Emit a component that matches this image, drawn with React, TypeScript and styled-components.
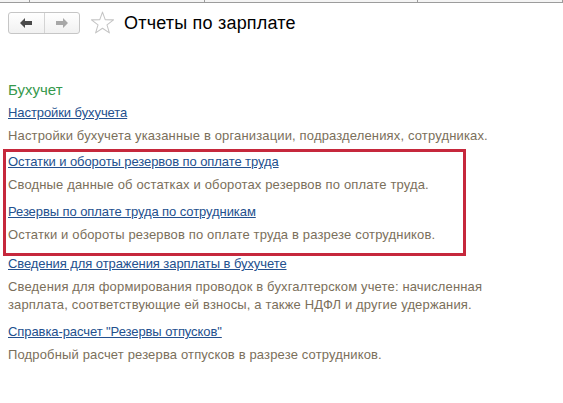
import React from 'react';
import styled, { createGlobalStyle } from 'styled-components';

const GlobalStyle = createGlobalStyle`
    body {
        margin: 0;
        background: #ffffff;
        font-family: "Liberation Sans", Arial, sans-serif;
    }
`;

const Page = styled.div`
    width: 563px;
    height: 403px;
    overflow: hidden;
    background: #ffffff;
`;

const TabStrip = styled.div`
    display: flex;
    height: 2px;
    background: #f4f4f4;
    border-bottom: 1px solid #9c9c9c;
`;

const TabStub = styled.div<{ $width: number }>`
    width: ${(p) => p.$width}px;
    flex: none;
    border-right: 1px solid #9c9c9c;
`;

const Header = styled.div`
    display: flex;
    align-items: center;
    height: 22px;
    margin-top: 9px;
    padding-left: 8px;
`;

const NavGroup = styled.div`
    display: flex;
    width: 72px;
    height: 22px;
    box-sizing: border-box;
    border: 1px solid #c6c6c6;
    border-radius: 3px;
    background: linear-gradient(#ffffff, #f1f1f1);
`;

const NavButton = styled.div<{ $divider?: boolean }>`
    flex: 1;
    display: flex;
    align-items: center;
    justify-content: center;
    border-left: ${(p) => (p.$divider ? '1px solid #d4d4d4' : 'none')};
`;

const StarBox = styled.div`
    display: flex;
    margin-left: 10px;
    margin-right: 9px;
`;

const Title = styled.div`
    font-size: 18px;
    line-height: 22px;
    letter-spacing: 0.2px;
    color: #000000;
`;

const Content = styled.div`
    display: flex;
    flex-direction: column;
    margin-top: 47px;
    padding-left: 8px;
`;

const SectionTitle = styled.div`
    font-size: 15px;
    line-height: 18px;
    color: #36994c;
    margin-bottom: 5px;
`;

const Item = styled.div`
    display: flex;
    flex-direction: column;
    margin-bottom: 9px;
`;

const ItemLink = styled.a`
    font-size: 13px;
    line-height: 18px;
    letter-spacing: -0.08px;
    color: #23508e;
    text-decoration: underline;
    cursor: pointer;
    align-self: flex-start;
`;

const ItemText = styled.div`
    font-size: 13px;
    line-height: 18px;
    letter-spacing: 0.15px;
    color: #7b6f5b;
    margin-top: 5px;
    width: 550px;
`;

const Highlight = styled.div`
    display: flex;
    flex-direction: column;
    width: 463px;
    box-sizing: border-box;
    margin-left: -5px;
    margin-top: -5px;
    margin-bottom: -1px;
    padding: 1px 0 0 2px;
    border: 3px solid #c6283c;
`;

const ArrowIcon = ({ dir, color }: { dir: 'left' | 'right'; color: string }) => (
    <svg width="12" height="10" viewBox="0 0 12 10">
        <path
            d="M0 5 L5 0 L5 3 L12 3 L12 7 L5 7 L5 10 Z"
            fill={color}
            transform={dir === 'right' ? 'translate(12 0) scale(-1 1)' : undefined}
        />
    </svg>
);

const StarIcon = () => (
    <svg width="25" height="24" viewBox="0 0 24 23">
        <path
            d="M12 1 L14.6 8.3 L22.6 8.5 L16.3 13.3 L18.6 21 L12 16.5 L5.4 21 L7.7 13.3 L1.4 8.5 L9.4 8.3 Z"
            fill="none"
            stroke="#c4c4c4"
            strokeWidth="1"
            strokeLinejoin="round"
        />
    </svg>
);

type Report = {
    title: string;
    text: React.ReactNode;
};

const before: Report[] = [
    {
        title: 'Настройки бухучета',
        text: 'Настройки бухучета указанные в организации, подразделениях, сотрудниках.',
    },
];

const highlighted: Report[] = [
    {
        title: 'Остатки и обороты резервов по оплате труда',
        text: 'Сводные данные об остатках и оборотах резервов по оплате труда.',
    },
    {
        title: 'Резервы по оплате труда по сотрудникам',
        text: 'Остатки и обороты резервов по оплате труда в разрезе сотрудников.',
    },
];

const after: Report[] = [
    {
        title: 'Сведения для отражения зарплаты в бухучете',
        text: (
            <>
                Сведения для формирования проводок в бухгалтерском учете: начисленная
                <br />
                зарплата, соответствующие ей взносы, а также НДФЛ и другие удержания.
            </>
        ),
    },
    {
        title: 'Справка-расчет "Резервы отпусков"',
        text: 'Подробный расчет резерва отпусков в разрезе сотрудников.',
    },
];

const ReportItem = ({ report }: { report: Report }) => (
    <Item>
        <ItemLink>{report.title}</ItemLink>
        <ItemText>{report.text}</ItemText>
    </Item>
);

export default function App() {
    return (
        <Page>
            <GlobalStyle />
            <TabStrip>
                <TabStub $width={29} />
                <TabStub $width={174} />
                <TabStub $width={212} />
                <TabStub $width={144} />
            </TabStrip>
            <Header>
                <NavGroup>
                    <NavButton>
                        <ArrowIcon dir="left" color="#4a4a4a" />
                    </NavButton>
                    <NavButton $divider>
                        <ArrowIcon dir="right" color="#a8a8a8" />
                    </NavButton>
                </NavGroup>
                <StarBox>
                    <StarIcon />
                </StarBox>
                <Title>Отчеты по зарплате</Title>
            </Header>
            <Content>
                <SectionTitle>Бухучет</SectionTitle>
                {before.map((r) => (
                    <ReportItem key={r.title} report={r} />
                ))}
                <Highlight>
                    {highlighted.map((r) => (
                        <ReportItem key={r.title} report={r} />
                    ))}
                </Highlight>
                {after.map((r) => (
                    <ReportItem key={r.title} report={r} />
                ))}
            </Content>
        </Page>
    );
}
